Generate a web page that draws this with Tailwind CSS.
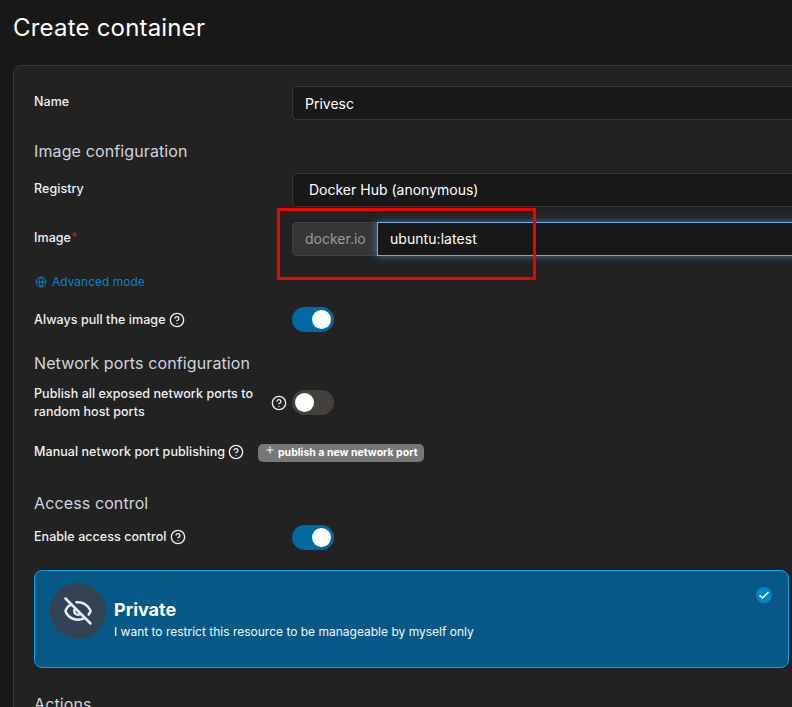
<!DOCTYPE html>
<html lang="en">
<head>
<meta charset="utf-8">
<title>Create container</title>
<script src="https://cdn.jsdelivr.net/npm/@tailwindcss/browser@4"></script>
</head>
<body class="bg-[#181818] font-['Inter',sans-serif] text-white">
<svg class="hidden">
  <symbol id="help" viewBox="0 0 24 24" fill="none" stroke="currentColor" stroke-width="2" stroke-linecap="round" stroke-linejoin="round"><circle cx="12" cy="12" r="10"/><path d="M9.09 9a3 3 0 0 1 5.83 1c0 2-3 3-3 3M12 17h.01"/></symbol>
</svg>
<div class="relative h-[707px] w-[792px] overflow-hidden">
  <h1 class="h-[65px] pl-[13px] pt-[12px] text-[24px] leading-[32px] tracking-[0.2px]">Create container</h1>
  <main class="ml-[13px] flex h-[700px] w-[797px] flex-col rounded-lg border border-[#383838] bg-[#222222] pl-5 pt-5 text-[12.5px] font-medium leading-[18px] text-[#f0f0f0]">
    <div class="flex h-[34px]">
      <label class="w-[258px] pt-[7px] tracking-[0.06px]">Name</label>
      <div class="flex-1 rounded-[5px] border border-[#383838] bg-[#181818] pl-3 pt-[8px] text-[14px] font-normal text-white">Privesc</div>
    </div>
    <h2 class="mt-5 h-[33px] text-[16px] font-normal leading-[22px] tracking-[0.12px] text-[#d0d5dd]">Image configuration</h2>
    <div class="flex h-[34px]">
      <label class="w-[258px] pt-[7px] tracking-[0.06px]">Registry</label>
      <div class="flex-1 rounded-[5px] border border-[#383838] bg-[#181818] pl-4 pt-[7px] text-[14px] font-normal text-white">Docker Hub (anonymous)</div>
    </div>
    <div class="mt-[15px] flex h-[34px]">
      <label class="w-[258px] pt-[7px] tracking-[0.06px]">Image<span class="text-[#c01c10]">*</span></label>
      <div class="w-[85px] rounded-l-[5px] border border-r-0 border-[#424242] bg-[#363636] pl-3 pt-[7px] text-[14px] font-normal text-[#999999]">docker.io</div>
      <div class="flex-1 border border-[#66afe9] bg-[#181818] pl-3 pt-[7px] text-[14px] font-normal tracking-[0.05px] text-white shadow-[0_0_8px_rgba(102,175,233,0.6)]">ubuntu:latest</div>
    </div>
    <div class="mt-[17px] flex h-[18px] items-center gap-[5px] pl-[1px] text-[12px] font-normal text-[#0086c9]">
      <svg class="size-3" viewBox="0 0 24 24" fill="none" stroke="currentColor" stroke-width="2"><circle cx="12" cy="12" r="10"/><path d="M2 12h20M12 2a15.3 15.3 0 0 1 4 10 15.3 15.3 0 0 1-4 10 15.3 15.3 0 0 1-4-10 15.3 15.3 0 0 1 4-10z"/></svg>
      <span>Advanced mode</span>
    </div>
    <div class="mt-4 flex h-[25px]">
      <div class="flex w-[258px] items-center gap-[3px]"><span class="tracking-[0.06px]">Always pull the image</span><svg class="size-4"><use href="#help"/></svg></div>
      <div class="flex h-[25px] w-[42px] items-center justify-end rounded-full bg-[#026aa2] px-[3px]"><span class="size-[19px] rounded-full bg-white"></span></div>
    </div>
    <h2 class="mt-5 h-[33px] text-[16px] font-normal leading-[22px] tracking-[0.12px] text-[#d0d5dd]">Network ports configuration</h2>
    <div class="flex h-[36px]">
      <div class="flex w-[258px] items-center"><span class="w-[237px] tracking-[0.06px]">Publish all exposed network ports to<br>random host ports</span><svg class="size-4"><use href="#help"/></svg></div>
      <div class="mt-[5px] flex h-[25px] w-[42px] items-center rounded-full bg-[#44403b] px-[3px]"><span class="size-[19px] rounded-full bg-white"></span></div>
    </div>
    <div class="mt-[21px] flex h-[20px]">
      <div class="flex w-[224px] items-center gap-[3px] whitespace-nowrap"><span class="pb-px tracking-[0.06px]">Manual network port publishing</span><svg class="size-4 shrink-0"><use href="#help"/></svg></div>
      <div class="mt-[2px] flex h-[18px] w-[166px] shrink-0 rounded-[5px] bg-[#777777] pl-2 text-[10.5px] font-bold leading-[17px] text-white"><svg class="mt-[2px] mr-[4px] size-2" viewBox="0 0 8 8" stroke="currentColor"><path d="M4 .5v7M.5 4h7"/></svg>publish a new network port</div>
    </div>
    <h2 class="mt-[30px] h-[33px] text-[16px] font-normal leading-[22px] tracking-[0.12px] text-[#d0d5dd]">Access control</h2>
    <div class="flex h-[25px]">
      <div class="flex h-[24px] w-[258px] items-center gap-1"><span class="tracking-[0.06px]">Enable access control</span><svg class="size-4"><use href="#help"/></svg></div>
      <div class="flex h-[25px] w-[42px] items-center justify-end rounded-full bg-[#026aa2] px-[3px]"><span class="size-[19px] rounded-full bg-white"></span></div>
    </div>
    <div class="mt-5 flex h-[98px] w-[755px] rounded-lg border border-[#0ba5ec] bg-[#065986] pl-[15px] pt-3">
      <div class="flex size-14 items-center justify-center rounded-full bg-[#344054] text-[#e0f2fe]">
        <svg class="size-[30px]" viewBox="0 0 24 24" fill="none" stroke="currentColor" stroke-width="2" stroke-linecap="round" stroke-linejoin="round"><path d="M10.733 5.076a10.744 10.744 0 0 1 11.205 6.575 1 1 0 0 1 0 .696 10.747 10.747 0 0 1-1.444 2.49M14.084 14.158a3 3 0 0 1-4.242-4.242M17.479 17.499a10.75 10.75 0 0 1-15.417-5.151 1 1 0 0 1 0-.696 10.75 10.75 0 0 1 4.446-5.143M2 2l20 20"/></svg>
      </div>
      <div class="ml-2 flex-1 pt-[15px]">
        <div class="text-[18px] font-bold leading-6 text-white">Private</div>
        <div class="text-[12px] font-normal leading-5 text-[#f0f9ff]">I want to restrict this resource to be manageable by myself only</div>
      </div>
      <div class="mr-4 mt-1 flex size-4 items-center justify-center rounded-full bg-[#0086c9]"><svg class="size-3" viewBox="0 0 12 12" fill="none" stroke="white" stroke-width="1.5"><path d="M1.5 6.2 4.5 9l6-6"/></svg></div>
    </div>
    <h2 class="mt-[25px] text-[16px] font-normal leading-[22px] tracking-[0.12px] text-[#d0d5dd]">Actions</h2>
  </main>
  <div class="absolute left-[277px] top-[208px] h-[72px] w-[259px] border-[3px] border-[#f50000]"></div>
</div>
</body>
</html>
